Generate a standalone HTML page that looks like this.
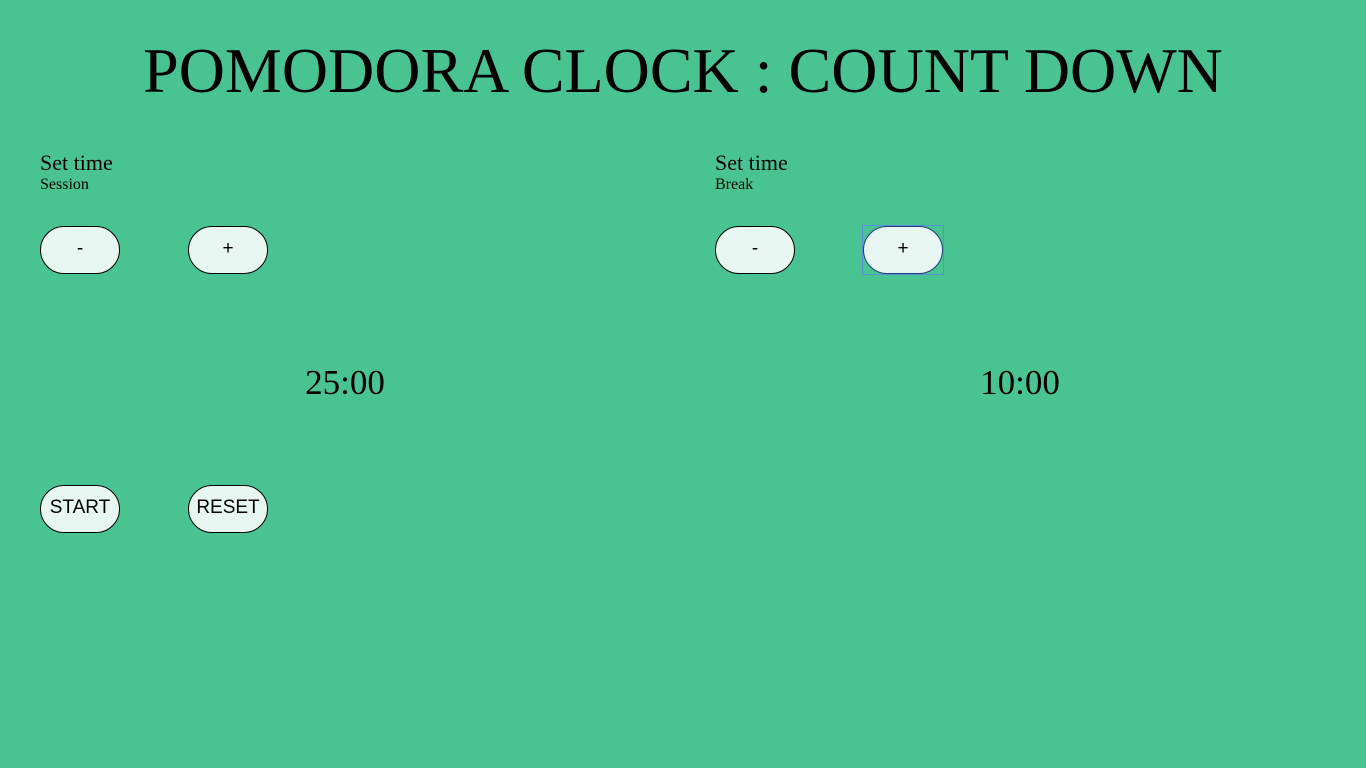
<!DOCTYPE html>
<html><head><style>
body{margin:0;background:#4ac392;font-family:"Liberation Serif",serif;color:#000;width:1366px;height:768px;overflow:hidden;position:relative}
h1{position:absolute;left:0;width:1366px;text-align:center;margin:0;font-weight:normal;font-size:64px;line-height:64px;top:39px}
.col{position:absolute;top:0;width:610px}
.st{position:absolute;top:149px;font-size:22px;line-height:28px;white-space:nowrap}
.sub{position:absolute;top:175px;font-size:16px;line-height:20px}
.b{position:absolute;width:80px;height:48px;box-sizing:border-box;border:1px solid #000;border-radius:24px;background:#e8f6f1;font-family:"Liberation Sans",sans-serif;font-size:19px;text-align:center;line-height:44px}
.t{position:absolute;top:362px;width:610px;text-align:center;font-size:35px;line-height:42px}
.o{position:absolute;left:147px;top:225px;width:82px;height:50px;box-sizing:border-box;border:1px solid #5b8fd6}
</style></head><body>
<h1>POMODORA CLOCK : COUNT DOWN</h1>
<div class="col" style="left:40px">
<div class="st">Set time</div><div class="sub">Session</div>
<div class="b" style="left:0;top:226px">-</div>
<div class="b" style="left:148px;top:226px">+</div>
<div class="t">25:00</div>
<div class="b" style="left:0;top:485px">START</div>
<div class="b" style="left:148px;top:485px">RESET</div>
</div>
<div class="col" style="left:715px">
<div class="st">Set time</div><div class="sub">Break</div>
<div class="b" style="left:0;top:226px">-</div>
<div class="b" style="left:148px;top:226px;border-color:#223a80">+</div>
<div class="o"></div>
<div class="t">10:00</div>
</div>
</body></html>
